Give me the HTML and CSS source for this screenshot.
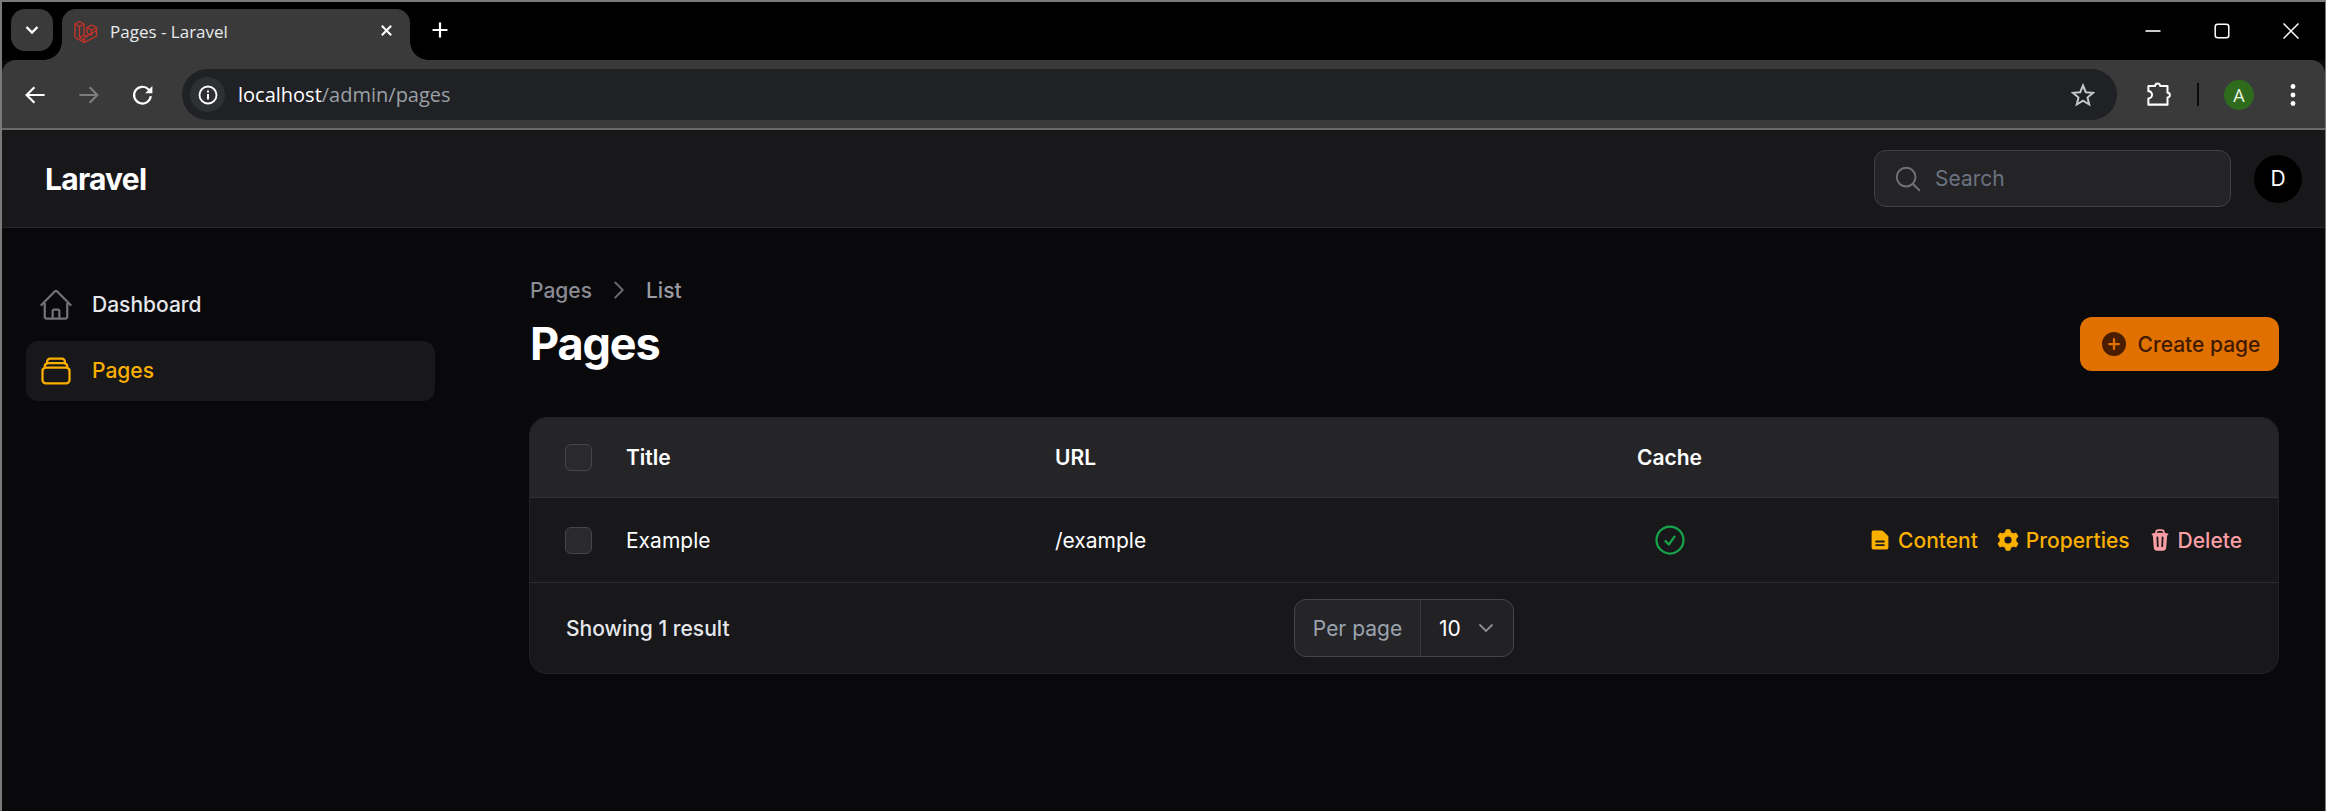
FILE: index.html
```html
<!DOCTYPE html>
<html lang="en">
<head>
<meta charset="utf-8">
<title>Pages - Laravel</title>
<link rel="stylesheet" href="styles.css">
</head>
<body>
<div class="window">
  <div class="strip">
    <button class="tab-search"><svg viewBox="0 0 16 16" class="i16"><path d="M2.500 5l5.500 5.500L13.500 5" fill="none" stroke="#fff" stroke-width="2.400"/></svg></button>
    <div class="tab">
      <svg class="favicon" viewBox="0 0 24 24" fill="none" stroke="#c9342a" stroke-width="1.300" stroke-linejoin="round">
        <path d="M1 5v13.500l9.500 5 12-6.500v-5.500"/>
        <path d="M1 5l4.500-2.500L10 5 5.500 7.500z"/>
        <path d="M5.500 7.500v11l5 2.700M10 5v11l-4.500 2.500"/>
        <path d="M10.500 23.500v-5.300l12-6.700M10 16l4 2.200"/>
        <path d="M13 8.500L17.500 6l5 2.500-5 2.500z"/>
        <path d="M13 8.500v5.500l4.500 2.500M22.500 8.500v3M17.500 11v5.500"/>
      </svg>
      <span class="tab-title">Pages - Laravel</span>
      <svg class="tab-close" viewBox="0 0 16 16"><path d="M3 3l10 10M13 3L3 13" stroke="#fff" stroke-width="2.200"/></svg>
    </div>
    <svg class="newtab" viewBox="0 0 18 18"><path d="M9 1.500v15M1.500 9h15" stroke="#fff" stroke-width="2.200"/></svg>
    <div class="winctl">
      <span class="wbtn"><svg viewBox="0 0 16 16" class="i16"><path d="M0.500 8h15" stroke="#fff" stroke-width="1.600"/></svg></span>
      <span class="wbtn"><svg viewBox="0 0 16 16" class="i16"><rect x="1.200" y="1.200" width="13.600" height="13.600" rx="2.500" fill="none" stroke="#fff" stroke-width="1.500"/></svg></span>
      <span class="wbtn"><svg viewBox="0 0 16 16" class="i16"><path d="M0.500 0.500l15 15M15.500 0.500l-15 15" stroke="#fff" stroke-width="1.500"/></svg></span>
    </div>
  </div>

  <div class="toolbar">
    <span class="tbtn"><svg viewBox="0 0 20 20" class="nav-btn"><path d="M18 10H3M9.500 3.500L3 10l6.500 6.500" fill="none" stroke="#fff" stroke-width="1.800"/></svg></span>
    <span class="tbtn"><svg viewBox="0 0 20 20" class="nav-btn"><path d="M2 10h15M10.500 3.500L17 10l-6.500 6.500" fill="none" stroke="#7c7c7c" stroke-width="1.800"/></svg></span>
    <span class="tbtn"><svg viewBox="0 0 20 20" class="nav-btn"><path d="M16.500 11a7 7 0 1 1-2-5.800L17 7.500" fill="none" stroke="#fff" stroke-width="1.800"/><path d="M17.800 2.500v6H11.800z" fill="#fff"/></svg></span>
    <div class="omnibox">
      <span class="chip"><svg viewBox="0 0 20 20" class="i20"><circle cx="10" cy="10" r="8.500" fill="none" stroke="#fff" stroke-width="1.800"/><path d="M10 9v5.500M10 5.500v2" stroke="#fff" stroke-width="2"/></svg></span>
      <span class="url">localhost<span class="url-path">/admin/pages</span></span>
      <svg class="star" viewBox="0 0 24 24"><path d="M12 2.500l2.800 6.700 7.200.600-5.500 4.700 1.700 7L12 17.700 5.800 21.500l1.700-7L2 9.800l7.200-.600z" fill="none" stroke="#c4c7c5" stroke-width="2" stroke-linejoin="miter"/></svg>
    </div>
    <span class="tbtn ext"><svg viewBox="0 0 24 24" class="ext-icon"><path d="M2 5h6a2.200 2.200 0 0 1 4.500 0h6.500v6a2 2 0 0 1 0 4.200V21.500H2v-5.500a3.200 3.200 0 0 0 0-6.500z" transform="translate(1 -0.500)" fill="none" stroke="#fff" stroke-width="1.800" stroke-linejoin="round"/></svg></span>
    <span class="sep"></span>
    <span class="tbtn"><span class="profile">A</span></span>
    <span class="tbtn"><svg viewBox="0 0 6 24" class="dots"><circle cx="3" cy="3.500" r="2.400" fill="#fff"/><circle cx="3" cy="12" r="2.400" fill="#fff"/><circle cx="3" cy="20.500" r="2.400" fill="#fff"/></svg></span>
  </div>

  <header class="topbar">
    <div class="brand">Laravel</div>
    <div class="search">
      <svg class="search-icon" viewBox="0 0 24 24" fill="none" stroke="#71717a" stroke-width="1.500"><path d="m21 21-5.197-5.197m0 0A7.500 7.500 0 1 0 5.196 5.196a7.500 7.500 0 0 0 10.607 10.607Z" stroke-linecap="round" stroke-linejoin="round"/></svg>
      <span class="search-text">Search</span>
    </div>
    <div class="user">D</div>
  </header>

  <div class="layout">
    <nav class="sidebar">
      <a class="nav-item">
        <svg class="nav-icon" viewBox="0 0 24 24" fill="none" stroke="#71717a" stroke-width="1.500" stroke-linecap="round" stroke-linejoin="round"><path d="m2.250 12 8.954-8.955c.44-.439 1.152-.439 1.591 0L21.750 12M4.500 9.750v10.125c0 .621.504 1.125 1.125 1.125H9.750v-4.875c0-.621.504-1.125 1.125-1.125h2.250c.621 0 1.125.504 1.125 1.125V21h4.125c.621 0 1.125-.504 1.125-1.125V9.750M8.250 21h8.250"/></svg>
        <span class="nav-label">Dashboard</span>
      </a>
      <a class="nav-item active">
        <svg class="nav-icon" viewBox="0 0 24 24" fill="none" stroke="#fbb000" stroke-width="1.500" stroke-linecap="round" stroke-linejoin="round"><path d="M6 6.878V6a2.250 2.250 0 0 1 2.250-2.250h7.500A2.250 2.250 0 0 1 18 6v.878m-12 0c.235-.083.487-.128.75-.128h10.500c.263 0 .515.045.75.128m-12 0A2.250 2.250 0 0 0 4.500 9v.878m13.500-3A2.250 2.250 0 0 1 19.500 9v.878m0 0a2.246 2.246 0 0 0-.75-.128H5.250c-.263 0-.515.045-.75.128m15 0A2.250 2.250 0 0 1 21 12v6a2.250 2.250 0 0 1-2.250 2.250H5.250A2.250 2.250 0 0 1 3 18v-6c0-.98.626-1.813 1.500-2.122"/></svg>
        <span class="nav-label">Pages</span>
      </a>
    </nav>

    <main class="main">
      <div class="page-head">
        <div class="heading">
          <div class="crumbs">
            <span>Pages</span>
            <svg class="crumb-sep" viewBox="0 0 24 24" fill="none" stroke="#6b6b73" stroke-width="1.800" stroke-linecap="round" stroke-linejoin="round"><path d="m8.250 4.500 7.500 7.500-7.500 7.500"/></svg>
            <span class="crumb-last">List</span>
          </div>
          <h1 class="title">Pages</h1>
        </div>
        <button class="create">
          <svg class="create-icon" viewBox="0 0 20 20" fill="#4a1d00"><path fill-rule="evenodd" clip-rule="evenodd" d="M10 18a8 8 0 1 0 0-16 8 8 0 0 0 0 16Zm.750-11.250a.750.750 0 0 0-1.500 0v2.500h-2.500a.750.750 0 0 0 0 1.500h2.500v2.500a.750.750 0 0 0 1.500 0v-2.500h2.500a.750.750 0 0 0 0-1.500h-2.500v-2.500Z"/></svg>
          <span>Create page</span>
        </button>
      </div>

      <section class="table">
        <div class="row head">
          <span class="box"></span>
          <span>Title</span>
          <span>URL</span>
          <span class="center">Cache</span>
          <span></span>
        </div>
        <div class="row body">
          <span class="box"></span>
          <span>Example</span>
          <span>/example</span>
          <span class="center"><svg class="check" viewBox="0 0 24 24" fill="none" stroke="#16a34a" stroke-width="1.500" stroke-linecap="round" stroke-linejoin="round"><path d="M9 12.750 11.250 15 15 9.750M21 12a9 9 0 1 1-18 0 9 9 0 0 1 18 0Z"/></svg></span>
          <span class="actions">
            <a class="action">
              <svg class="act-icon" viewBox="0 0 20 20" fill="currentColor"><path fill-rule="evenodd" clip-rule="evenodd" d="M4.500 2A1.500 1.500 0 0 0 3 3.500v13A1.500 1.500 0 0 0 4.500 18h11a1.500 1.500 0 0 0 1.500-1.500V7.621a1.500 1.500 0 0 0-.44-1.060l-4.120-4.122A1.500 1.500 0 0 0 11.378 2H4.500Zm2.250 8.500a.750.750 0 0 0 0 1.500h6.500a.750.750 0 0 0 0-1.500h-6.500Zm0 3a.750.750 0 0 0 0 1.500h6.500a.750.750 0 0 0 0-1.500h-6.500Z"/></svg>
              Content
            </a>
            <a class="action">
              <svg class="act-icon" viewBox="0 0 20 20" fill="currentColor"><path fill-rule="evenodd" clip-rule="evenodd" d="M7.840 1.804A1 1 0 0 1 8.820 1h2.360a1 1 0 0 1 .98.804l.331 1.652a6.993 6.993 0 0 1 1.929 1.115l1.598-.54a1 1 0 0 1 1.186.447l1.180 2.044a1 1 0 0 1-.205 1.251l-1.267 1.113a7.047 7.047 0 0 1 0 2.228l1.267 1.113a1 1 0 0 1 .206 1.250l-1.180 2.045a1 1 0 0 1-1.187.447l-1.598-.54a6.993 6.993 0 0 1-1.929 1.115l-.33 1.652a1 1 0 0 1-.98.804H8.820a1 1 0 0 1-.98-.804l-.331-1.652a6.993 6.993 0 0 1-1.929-1.115l-1.598.54a1 1 0 0 1-1.186-.447l-1.180-2.044a1 1 0 0 1 .205-1.251l1.267-1.114a7.050 7.050 0 0 1 0-2.227L1.821 7.773a1 1 0 0 1-.206-1.250l1.180-2.045a1 1 0 0 1 1.187-.447l1.598.54A6.992 6.992 0 0 1 7.510 3.456l.33-1.652ZM10 13a3 3 0 1 0 0-6 3 3 0 0 0 0 6Z"/></svg>
              Properties
            </a>
            <a class="action danger">
              <svg class="act-icon" viewBox="0 0 20 20" fill="currentColor"><path fill-rule="evenodd" clip-rule="evenodd" d="M8.750 1A2.750 2.750 0 0 0 6 3.750v.443c-.795.077-1.584.176-2.365.298a.750.750 0 1 0 .23 1.482l.149-.022.841 10.518A2.750 2.750 0 0 0 7.596 19h4.807a2.750 2.750 0 0 0 2.742-2.530l.841-10.520.149.023a.750.750 0 0 0 .23-1.482A41.030 41.030 0 0 0 14 4.193V3.750A2.750 2.750 0 0 0 11.250 1h-2.500ZM10 4c.84 0 1.673.025 2.500.075V3.750c0-.69-.56-1.250-1.250-1.250h-2.500c-.69 0-1.250.56-1.250 1.250v.325C8.327 4.025 9.160 4 10 4ZM8.580 7.720a.750.750 0 0 0-1.500.06l.3 7.500a.750.750 0 1 0 1.500-.06l-.3-7.500Zm4.340.06a.750.750 0 1 0-1.500-.06l-.3 7.500a.750.750 0 1 0 1.500.06l.3-7.500Z"/></svg>
              Delete
            </a>
          </span>
        </div>
        <div class="foot">
          <span class="showing">Showing 1 result</span>
          <div class="perpage">
            <span class="pp-label">Per page</span>
            <span class="pp-select">10
              <svg class="pp-chev" viewBox="0 0 20 20" fill="none" stroke="#8b8b93" stroke-width="1.500" stroke-linecap="round" stroke-linejoin="round"><path d="M5 7.500l5 5 5-5"/></svg>
            </span>
          </div>
          <span></span>
        </div>
      </section>
    </main>
  </div>
</div>
</body>
</html>
```

FILE: styles.css
```css
* { box-sizing: border-box; }
html, body { margin: 0; padding: 0; height: 811px; overflow: hidden; background: #000; }
svg { display: block; flex: none; }
button { border: 0; padding: 0; font: inherit; }
.i16 { width: 16px; height: 16px; }
.i20 { width: 20px; height: 20px; }

.window {
  height: 811px; display: flex; flex-direction: column;
  border-top: 2px solid #7a7a7a; border-left: 2px solid #7a7a7a; border-right: 1px solid #7a7a7a;
  background: #09090b; font-family: Inter, "Liberation Sans", sans-serif;
}

/* Browser tab strip */
.strip { height: 58px; flex: none; background: #000; display: flex; align-items: flex-start; padding: 7px 0 0 9px; }
.tab-search { width: 42px; height: 42px; border-radius: 14px; background: #3a3a3a; display: flex; align-items: center; justify-content: center; }
.tab { position: relative; width: 348px; height: 51px; margin-left: 9px; background: #3a3a3a; border-radius: 14px 14px 0 0; display: flex; align-items: center; padding: 0 16px 0 12px; }
.tab::before, .tab::after { content: ""; position: absolute; bottom: 0; width: 18px; height: 18px; }
.tab::before { left: -18px; background: radial-gradient(circle at 0 0, transparent 17.500px, #3a3a3a 18px); }
.tab::after { right: -18px; background: radial-gradient(circle at 100% 0, transparent 17.500px, #3a3a3a 18px); }
.favicon { width: 24px; height: 24px; margin-top: -8px; }
.tab-title { margin-left: 12px; color: #e8eaed; font: 400 17px/20px "Open Sans", sans-serif; margin-top: -5px; }
.tab-close { width: 15px; height: 15px; margin-left: auto; margin-top: -8px; }
.newtab { width: 18px; height: 18px; margin: 12px 0 0 21px; }
.winctl { margin-left: auto; display: flex; margin-top: -7px; }
.wbtn { width: 69px; height: 58px; display: flex; align-items: center; justify-content: center; }

/* Browser toolbar */
.toolbar { height: 70px; flex: none; background: #3a3a3a; border-bottom: 2px solid #6a6a6a; border-radius: 14px 14px 0 0; display: flex; align-items: center; padding: 1px 5px 0 6px; }
.tbtn { width: 54px; height: 54px; display: flex; align-items: center; justify-content: center; flex: none; }
.nav-btn { width: 24px; height: 24px; }
.omnibox { flex: 1; height: 51px; margin-left: 12px; background: #202124; border-radius: 26px; display: flex; align-items: center; padding: 0 22px 0 8px; }
.chip { width: 35px; height: 35px; border-radius: 50%; background: #2f3033; display: flex; align-items: center; justify-content: center; }
.url { margin-left: 13px; color: #fff; font: 400 20px/26px "Open Sans", sans-serif; }
.url-path { color: #9aa0a6; }
.star { width: 24px; height: 24px; margin-left: auto; }
.ext { margin-left: 14px; }
.ext-icon { width: 27px; height: 27px; }
.sep { width: 2px; height: 23px; background: #0a0a0a; margin-left: 12px; margin-right: 13px; }
.profile { width: 30px; height: 30px; border-radius: 50%; background: #2f6b1c; color: #e8f5e0; font: 400 18px/30px "Open Sans", sans-serif; text-align: center; }
.dots { width: 6px; height: 24px; }

/* App top bar */
.topbar { height: 98px; flex: none; background: #18181b; border-bottom: 1px solid #27272a; display: flex; align-items: center; padding: 0 23px 0 43px; }
.brand { color: #fff; font-size: 30px; font-weight: 700; letter-spacing: -0.75px; line-height: 36px; }
.search { margin-left: auto; width: 357px; height: 57px; background: #242427; border: 1.500px solid #424246; border-radius: 12px; display: flex; align-items: center; padding-left: 18px; }
.search-icon { width: 30px; height: 30px; }
.search-text { margin-left: 12px; color: #6b7280; font-size: 21px; line-height: 30px; }
.user { width: 48px; height: 48px; border-radius: 50%; background: #000; color: #fff; font-size: 21px; line-height: 48px; text-align: center; margin-left: 23px; }

/* Layout */
.layout { flex: 1; display: flex; min-height: 0; }
.sidebar { width: 480px; flex: none; padding: 47px 47px 0 24px; display: flex; flex-direction: column; gap: 6px; }
.nav-item { height: 60px; border-radius: 12px; display: flex; align-items: center; padding-left: 12px; color: #e5e7eb; }
.nav-item.active { background: #18181a; color: #fbb000; }
.nav-icon { width: 36px; height: 36px; }
.nav-label { margin-left: 18px; font-size: 21px; font-weight: 500; line-height: 30px; }

.main { flex: 1; min-width: 0; padding: 47px 46px 0 47px; }
.page-head { display: flex; justify-content: space-between; align-items: flex-end; }
.heading { margin-left: 1px; }
.crumbs { display: flex; align-items: center; height: 30px; color: #8b8b93; font-size: 21px; font-weight: 500; }
.crumb-sep { width: 24px; height: 24px; margin: 0 15px 0 15px; }
.crumb-last { color: #9c9ca4; }
.title { margin: 12px 0 0; color: #fff; font-size: 45px; line-height: 54px; font-weight: 700; letter-spacing: -1.100px; }
.create { height: 54px; width: 199px; border-radius: 12px; background: #e07000; color: #3f1a00; display: flex; align-items: center; justify-content: center; gap: 9px; font-size: 21px; font-weight: 500; font-family: inherit; }
.create-icon { width: 30px; height: 30px; }

/* Table */
.table { margin-top: 46px; background: #18181b; border: 1px solid #232326; border-radius: 18px; overflow: hidden; }
.row { display: grid; grid-template-columns: 96px 429px 558px 113px 1fr; align-items: center; color: #fff; font-size: 21px; }
.row .box { margin-left: 35px; }
.head { height: 80px; background: #252528; font-weight: 600; border-bottom: 1px solid #303033; }
.body { height: 85px; border-bottom: 1px solid #2c2c2f; }
.box { width: 27px; height: 27px; border-radius: 6px; background: #2a2a2d; border: 1.500px solid #46464a; }
.center { display: flex; justify-content: center; }
.check { width: 36px; height: 36px; }
.actions { display: flex; justify-content: flex-end; gap: 18px; padding-right: 36px; }
.action { display: flex; align-items: center; gap: 6px; color: #fbb000; font-weight: 500; font-size: 21px; }
.action.danger { color: #fb9fa6; }
.act-icon { width: 24px; height: 24px; }
.foot { height: 90px; display: grid; grid-template-columns: 1fr auto 1fr; align-items: center; padding: 0 36px; }
.showing { color: #e5e7eb; font-size: 21px; font-weight: 500; }
.perpage { height: 58px; display: flex; border: 1.500px solid #46464a; border-radius: 12px; background: #252528; align-items: stretch; font-size: 21px; }
.pp-label { width: 126px; display: flex; align-items: center; justify-content: center; color: #9ca3af; border-right: 1px solid #38383b; }
.pp-select { width: 92px; display: flex; align-items: center; padding-left: 18px; color: #fff; background: #222225; border-radius: 0 12px 12px 0; }
.pp-chev { width: 24px; height: 24px; margin-left: 13px; }
```
